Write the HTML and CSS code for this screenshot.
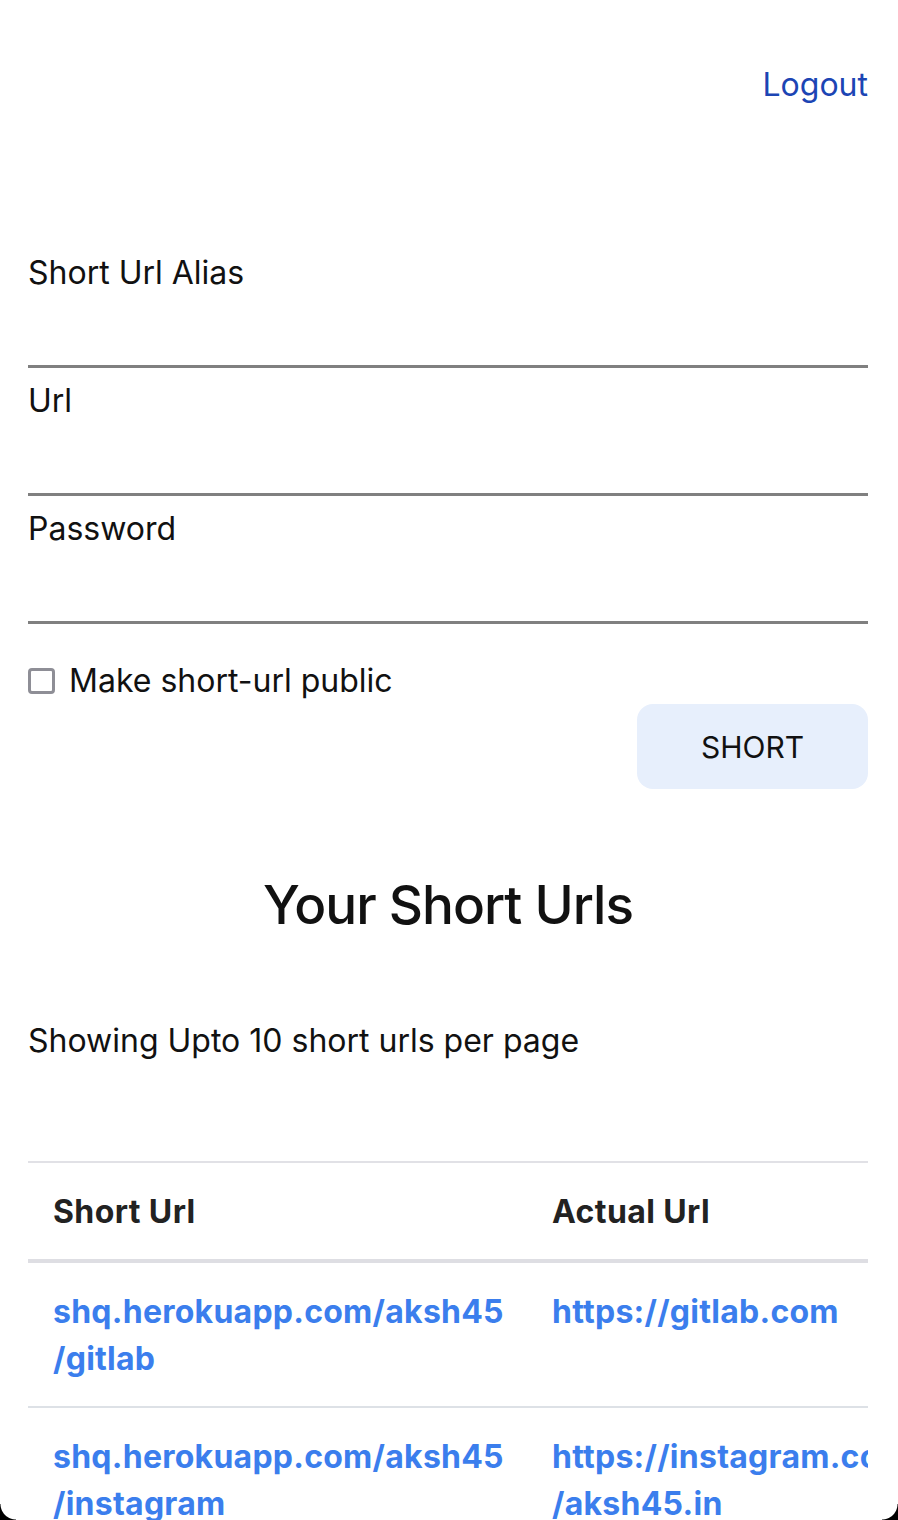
FILE: index.html
```html
<!DOCTYPE html>
<html>
<head>
<meta charset="utf-8">
<link rel="stylesheet" href="styles.css">
</head>
<body>
<div class="page">
  <header class="topbar">
    <a class="logout" href="#">Logout</a>
  </header>
  <form class="form">
    <label class="field">
      <span class="label">Short Url Alias</span>
      <input class="input" type="text">
    </label>
    <label class="field">
      <span class="label">Url</span>
      <input class="input" type="text">
    </label>
    <label class="field">
      <span class="label">Password</span>
      <input class="input" type="password">
    </label>
    <label class="check">
      <span class="box"></span>
      <span>Make short-url public</span>
    </label>
    <div class="actions">
      <button class="btn" type="button">SHORT</button>
    </div>
  </form>
  <h1 class="title">Your Short Urls</h1>
  <p class="info">Showing Upto 10 short urls per page</p>
  <div class="table-wrap">
    <table class="table">
      <colgroup><col class="c1"><col class="c2"></colgroup>
      <thead>
        <tr><th>Short Url</th><th>Actual Url</th></tr>
      </thead>
      <tbody>
        <tr>
          <td><a href="#">shq.herokuapp.com/aksh45<wbr>/gitlab</a></td>
          <td><a href="#">https://gitlab.com</a></td>
        </tr>
        <tr>
          <td><a href="#">shq.herokuapp.com/aksh45<wbr>/instagram</a></td>
          <td><a href="#">https://instagram.com<wbr>/aksh45.in</a></td>
        </tr>
      </tbody>
    </table>
  </div>
</div>
<div class="corner corner-l"></div>
<div class="corner corner-r"></div>
</body>
</html>
```
FILE: styles.css
```css
* { box-sizing: border-box; }
html, body {
  margin: 0;
  padding: 0;
  background: #fff;
}
body {
  font-family: Inter, "Noto Sans", sans-serif;
  color: #111;
  font-size: 32px;
}
.page {
  padding: 0 30px 0 28px;
}
.topbar {
  display: flex;
  justify-content: flex-end;
  padding-top: 65px;
}
.logout {
  color: #1c45b4;
  text-decoration: none;
  font-size: 32px;
  line-height: 40px;
}
.form {
  margin-top: 148px;
  display: flex;
  flex-direction: column;
}
.field {
  display: flex;
  flex-direction: column;
  margin-bottom: 13px;
}
.label {
  line-height: 40px;
  font-size: 32px;
}
.input {
  height: 75px;
  border: none;
  border-bottom: 3px solid #808080;
  outline: none;
  background: transparent;
  font: inherit;
}
.check {
  display: flex;
  align-items: center;
  gap: 14px;
  margin-top: 24px;
  line-height: 40px;
}
.box {
  width: 27px;
  height: 26px;
  border: 3px solid #8e8e96;
  border-radius: 4px;
}
.actions {
  display: flex;
  justify-content: flex-end;
  margin-top: 3px;
}
.btn {
  width: 231px;
  height: 85px;
  border: none;
  border-radius: 16px;
  background: #e7effc;
  font-family: Inter, "Noto Sans", sans-serif;
  font-size: 30px;
  color: #111;
}
.title {
  margin: 84px 0 0;
  text-align: center;
  font-size: 53px;
  font-weight: 500;
  line-height: 64px;
  letter-spacing: -1px;
}
.info {
  margin: 84px 0 0;
  line-height: 40px;
  font-size: 32px;
}
.table-wrap {
  margin-top: 100px;
  width: 840px;
  overflow: hidden;
}
.table {
  width: 840px;
  table-layout: fixed;
  border-collapse: collapse;
  border-top: 2px solid #e1e1e6;
}
.c1 { width: 499px; }
.c2 { width: 341px; }
.table th {
  text-align: left;
  font-weight: 700;
  color: #222;
  padding: 25px 25px 23px;
  line-height: 48px;
  border-bottom: 4px solid #dedee3;
  font-size: 32px;
  letter-spacing: 0.4px;
}
.table td {
  padding: 25px 25px 24px;
  line-height: 47px;
  border-bottom: 2px solid #dde1e6;
  vertical-align: top;
  white-space: normal;
}
.table td a {
  color: #3b7eed;
  font-weight: 700;
  text-decoration: none;
  font-size: 32px;
  letter-spacing: 0.25px;
}
.corner {
  position: fixed;
  bottom: 0;
  width: 16px;
  height: 16px;
}
.corner-l {
  left: 0;
  background: radial-gradient(circle at 100% 0, transparent 15px, #000 16px);
}
.corner-r {
  right: 0;
  background: radial-gradient(circle at 0 0, transparent 15px, #000 16px);
}
```
